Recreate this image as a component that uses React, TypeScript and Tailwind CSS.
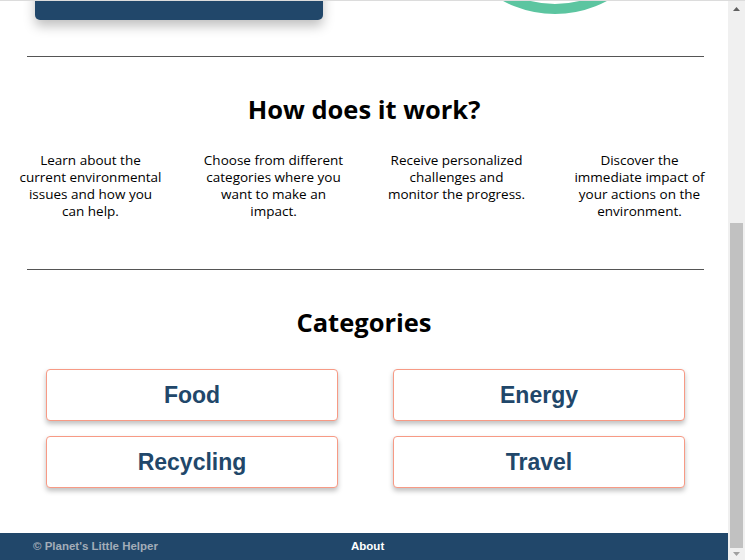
import React from "react";

const steps = [
  ["Learn about the", "current environmental", "issues and how you", "can help."],
  ["Choose from different", "categories where you", "want to make an", "impact."],
  ["Receive personalized", "challenges and", "monitor the progress."],
  ["Discover the", "immediate impact of", "your actions on the", "environment."],
];

const categories = ["Food", "Energy", "Recycling", "Travel"];

function Scrollbar() {
  return (
    <div className="flex h-full w-[17px] shrink-0 flex-col items-center bg-[#f0f0f0]">
      <div className="flex h-[17px] w-full items-center justify-center">
        <svg width="7" height="4" viewBox="0 0 7 4">
          <path d="M3.5 0 L7 4 L0 4 Z" fill="#606060" />
        </svg>
      </div>
      <div className="mt-[205px] h-[326px] w-[13px] bg-[#c1c1c1]" />
      <div className="flex h-[12px] w-full items-center justify-center">
        <svg width="7" height="4" viewBox="0 0 7 4">
          <path d="M0 0 L7 0 L3.5 4 Z" fill="#a0a0a0" />
        </svg>
      </div>
    </div>
  );
}

export default function App() {
  return (
    <div className="flex h-[560px] w-[745px] overflow-hidden border-t border-[#dcdcdc] bg-white font-['Open_Sans',sans-serif] text-black">
      <div className="flex h-full w-[728px] flex-col overflow-hidden">
        {/* hero, scrolled mostly out of view */}
        <div className="-mt-[200px] flex h-[219px] shrink-0 items-end">
          <div className="ml-[35px] h-[60px] w-[288px] rounded-[5px] bg-[#21476a] shadow-[0_6px_12px_rgba(0,0,0,0.25)]" />
          <div className="mb-[6px] ml-[122px] h-[220px] w-[220px]">
            <svg width="220" height="220" viewBox="0 0 220 220">
              <circle cx="110" cy="110" r="105" fill="none" stroke="#5cc5a0" strokeWidth="10" />
            </svg>
          </div>
        </div>

        <div className="ml-[27px] mr-[24px] mt-[36px] h-px bg-[#555]" />

        <h2 className="mt-[36px] text-center text-[25.5px] font-bold leading-[32px]">How does it work?</h2>

        <div className="ml-[-1px] mr-[-3px] mt-[27px] grid grid-cols-4 text-center text-[13.5px] leading-[17px]">
          {steps.map((lines, i) => (
            <p key={i} className="whitespace-nowrap">
              {lines.map((l, j) => (
                <span key={j} className="block">
                  {l}
                </span>
              ))}
            </p>
          ))}
        </div>

        <div className="ml-[27px] mr-[24px] mt-[49px] h-px bg-[#555]" />

        <h2 className="mt-[36px] text-center text-[25.5px] font-bold leading-[32px]">Categories</h2>

        <div className="ml-[46px] mt-[31px] grid w-[639px] grid-cols-2 gap-x-[55px] gap-y-[15px]">
          {categories.map((c) => (
            <button
              key={c}
              className="h-[52px] rounded-[4px] border border-[#f79a85] bg-white font-['Liberation_Sans',Arial,sans-serif] text-[23px] font-bold text-[#21476a] shadow-[0_3px_5px_rgba(0,0,0,0.25)]"
            >
              {c}
            </button>
          ))}
        </div>

        <footer className="mt-auto flex h-[27px] shrink-0 items-center bg-[#21476a] font-['Liberation_Sans',Arial,sans-serif] text-[11.5px] font-bold">
          <span className="ml-[33px] w-[318px] text-[#a3adb8]">© Planet's Little Helper</span>
          <span className="text-white">About</span>
        </footer>
      </div>
      <Scrollbar />
    </div>
  );
}
